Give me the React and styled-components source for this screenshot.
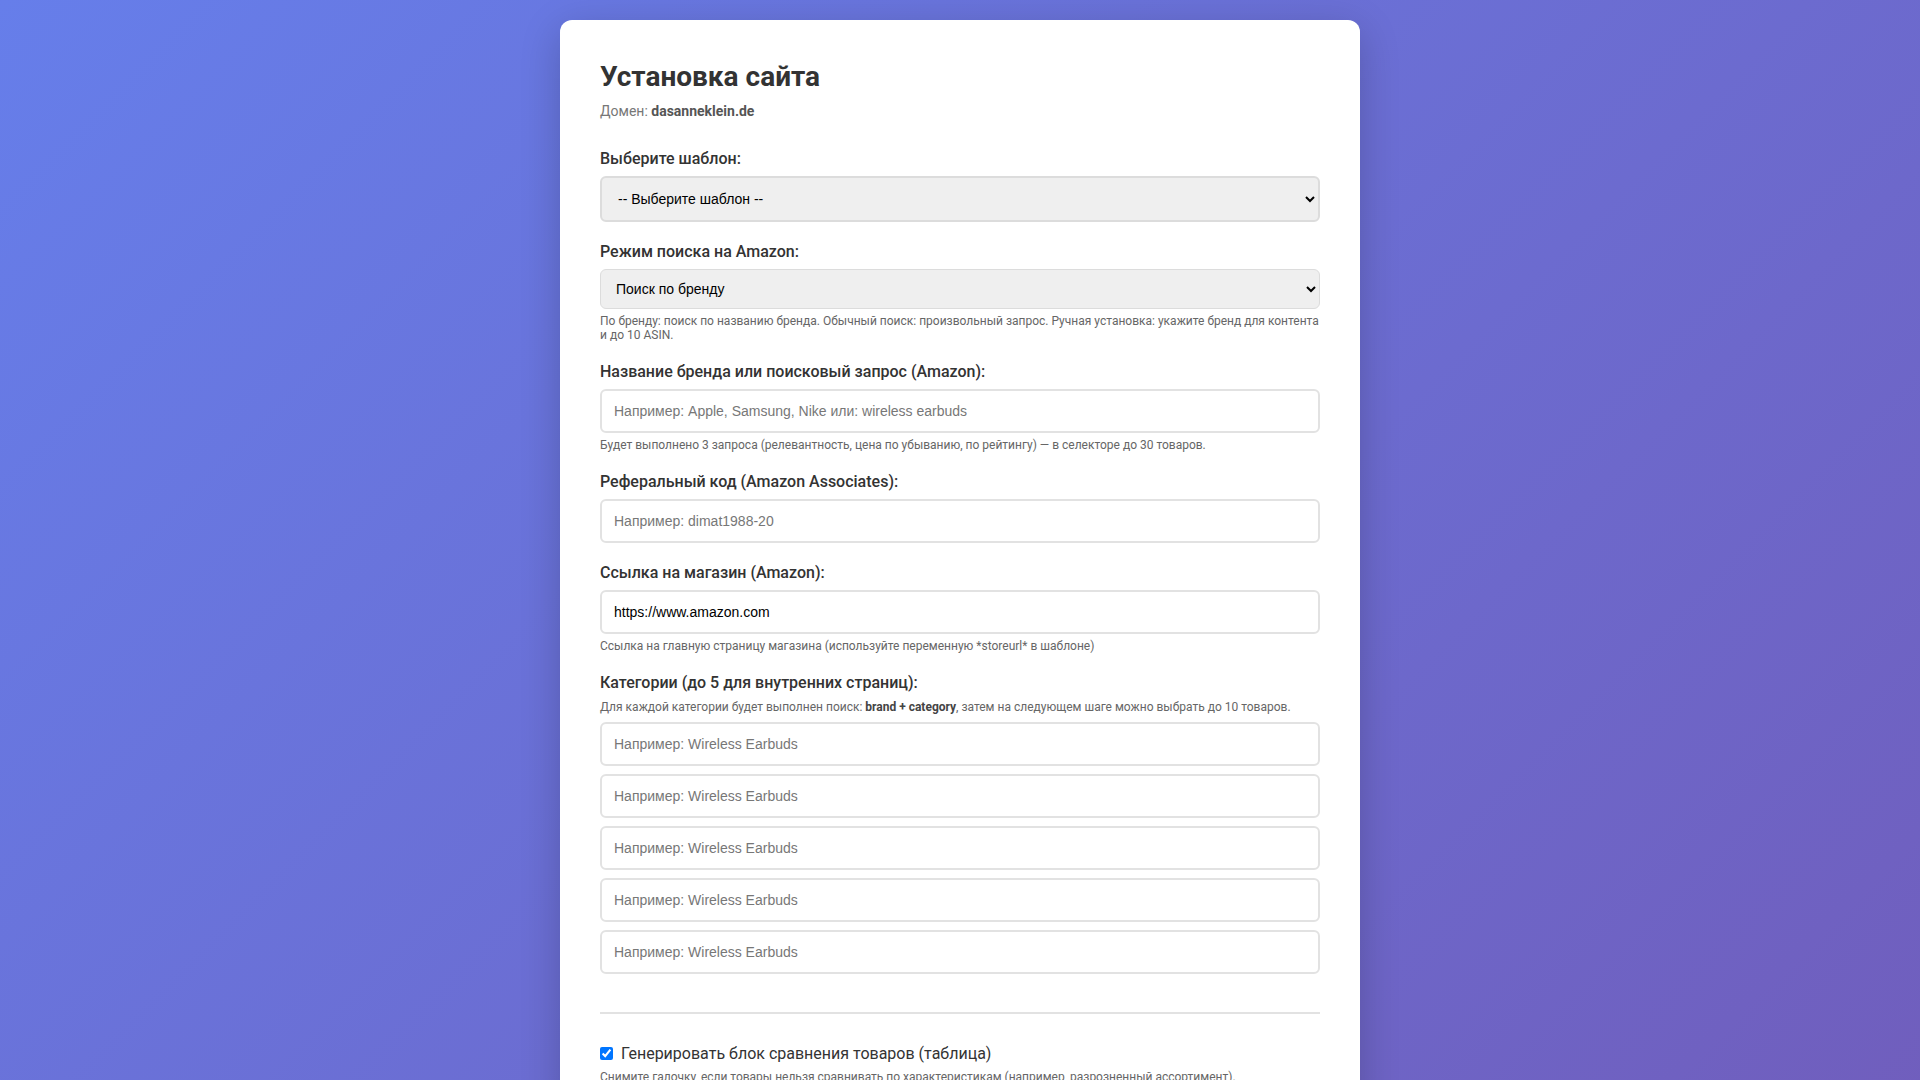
import React, { useState } from 'react';
import styled, { createGlobalStyle } from 'styled-components';

const GlobalStyle = createGlobalStyle`
  * {
    box-sizing: border-box;
  }

  html {
    background: linear-gradient(135deg, #667eea 0%, #764ba2 161%) fixed;
    min-height: 100%;
  }

  body {
    margin: 0;
    padding: 20px;
    font-family: Roboto, "Noto Sans", "Liberation Sans", sans-serif;
    color: #333;
  }
`;

const CATEGORY_SLOTS = 5;

function App() {
  const [mode, setMode] = useState('brand');
  const [storeUrl, setStoreUrl] = useState('https://www.amazon.com');
  const [categories, setCategories] = useState(Array(CATEGORY_SLOTS).fill(''));
  const [compare, setCompare] = useState(true);

  // обновление одной категории по индексу
  const updateCategory = (index, value) => {
    setCategories(prev => prev.map((c, i) => (i === index ? value : c)));
  };

  return (
    <>
      <GlobalStyle />
      <Card>
        <Title>Установка сайта</Title>
        <Domain>
          Домен: <strong>dasanneklein.de</strong>
        </Domain>

        <FormGroup>
          <Label>Выберите шаблон:</Label>
          <Select defaultValue="" $tall>
            <option value="">-- Выберите шаблон --</option>
          </Select>
        </FormGroup>

        <FormGroup>
          <Label>Режим поиска на Amazon:</Label>
          <Select value={mode} onChange={e => setMode(e.target.value)}>
            <option value="brand">Поиск по бренду</option>
            <option value="search">Обычный поиск</option>
            <option value="manual">Ручная установка</option>
          </Select>
          <Hint>
            По бренду: поиск по названию бренда. Обычный поиск: произвольный запрос. Ручная установка: укажите бренд для контента и до 10 ASIN.
          </Hint>
        </FormGroup>

        <FormGroup>
          <Label>Название бренда или поисковый запрос (Amazon):</Label>
          <Input type="text" placeholder="Например: Apple, Samsung, Nike или: wireless earbuds" />
          <Hint>
            Будет выполнено 3 запроса (релевантность, цена по убыванию, по рейтингу) — в селекторе до 30 товаров.
          </Hint>
        </FormGroup>

        <FormGroup>
          <Label>Реферальный код (Amazon Associates):</Label>
          <Input type="text" placeholder="Например: dimat1988-20" />
        </FormGroup>

        <FormGroup>
          <Label>Ссылка на магазин (Amazon):</Label>
          <Input type="text" value={storeUrl} onChange={e => setStoreUrl(e.target.value)} />
          <Hint>Ссылка на главную страницу магазина (используйте переменную *storeurl* в шаблоне)</Hint>
        </FormGroup>

        <FormGroup>
          <Label>Категории (до 5 для внутренних страниц):</Label>
          <CategoryHint>
            Для каждой категории будет выполнен поиск: <strong>brand + category</strong>, затем на следующем шаге можно выбрать до 10 товаров.
          </CategoryHint>
          <CategoryList>
            {categories.map((value, i) => (
              <Input
                key={i}
                type="text"
                placeholder="Например: Wireless Earbuds"
                value={value}
                onChange={e => updateCategory(i, e.target.value)}
              />
            ))}
          </CategoryList>
        </FormGroup>

        <Divider />

        <CheckRow>
          <Checkbox type="checkbox" checked={compare} onChange={() => setCompare(!compare)} />
          Генерировать блок сравнения товаров (таблица)
        </CheckRow>
        <CheckHint>
          Снимите галочку, если товары нельзя сравнивать по характеристикам (например, разрозненный ассортимент).
        </CheckHint>
      </Card>
    </>
  );
}

const Card = styled.div`
  width: 800px;
  margin: 0 auto;
  padding: 40px;
  background: #fff;
  border-radius: 12px;
  box-shadow: 0 10px 40px rgba(0, 0, 0, 0.2);
`;

const Title = styled.h1`
  margin: 0 0 10px;
  font-size: 28px;
  font-weight: 700;
  color: #333;
`;

const Domain = styled.div`
  margin-bottom: 30px;
  font-size: 14px;
  color: #777;

  strong {
    color: #555;
    font-weight: 700;
  }
`;

const FormGroup = styled.div`
  margin-bottom: 20px;
`;

const Label = styled.label`
  display: block;
  margin-bottom: 8px;
  font-size: 16px;
  font-weight: 500;
  color: #333;
`;

const Select = styled.select`
  display: block;
  width: 100%;
  height: ${props => (props.$tall ? '46px' : '40px')};
  padding: 0 ${props => (props.$tall ? '12px' : '11px')};
  border: ${props => (props.$tall ? '2px' : '1px')} solid #dcdcdc;
  border-radius: 6px;
  background-color: #efefef;
  font-family: "Liberation Sans", Arial, sans-serif;
  font-size: 14px;
  color: #000;
`;

const Input = styled.input`
  display: block;
  width: 100%;
  height: 44px;
  padding: 0 12px;
  border: 2px solid #e2e2e2;
  border-radius: 6px;
  background: #fff;
  font-family: "Liberation Sans", Arial, sans-serif;
  font-size: 14px;
  color: #000;
  outline: none;

  &::placeholder {
    color: #777;
  }

  &:focus {
    border-color: #667eea;
  }
`;

const Hint = styled.div`
  margin-top: 5px;
  font-size: 12px;
  line-height: 14px;
  color: #666;
`;

const CategoryHint = styled(Hint)`
  margin: 0 0 8px;

  strong {
    color: #444;
  }
`;

const CategoryList = styled.div`
  display: flex;
  flex-direction: column;
  gap: 8px;
`;

const Divider = styled.hr`
  margin: 38px 0 30px;
  border: none;
  border-top: 2px solid #e2e2e2;
`;

const CheckRow = styled.label`
  display: flex;
  align-items: center;
  font-size: 16px;
  color: #333;
`;

const Checkbox = styled.input`
  width: 13px;
  height: 13px;
  margin: 0 8px 0 0;
`;

const CheckHint = styled(Hint)`
  margin-top: 7px;
`;

export default App;
